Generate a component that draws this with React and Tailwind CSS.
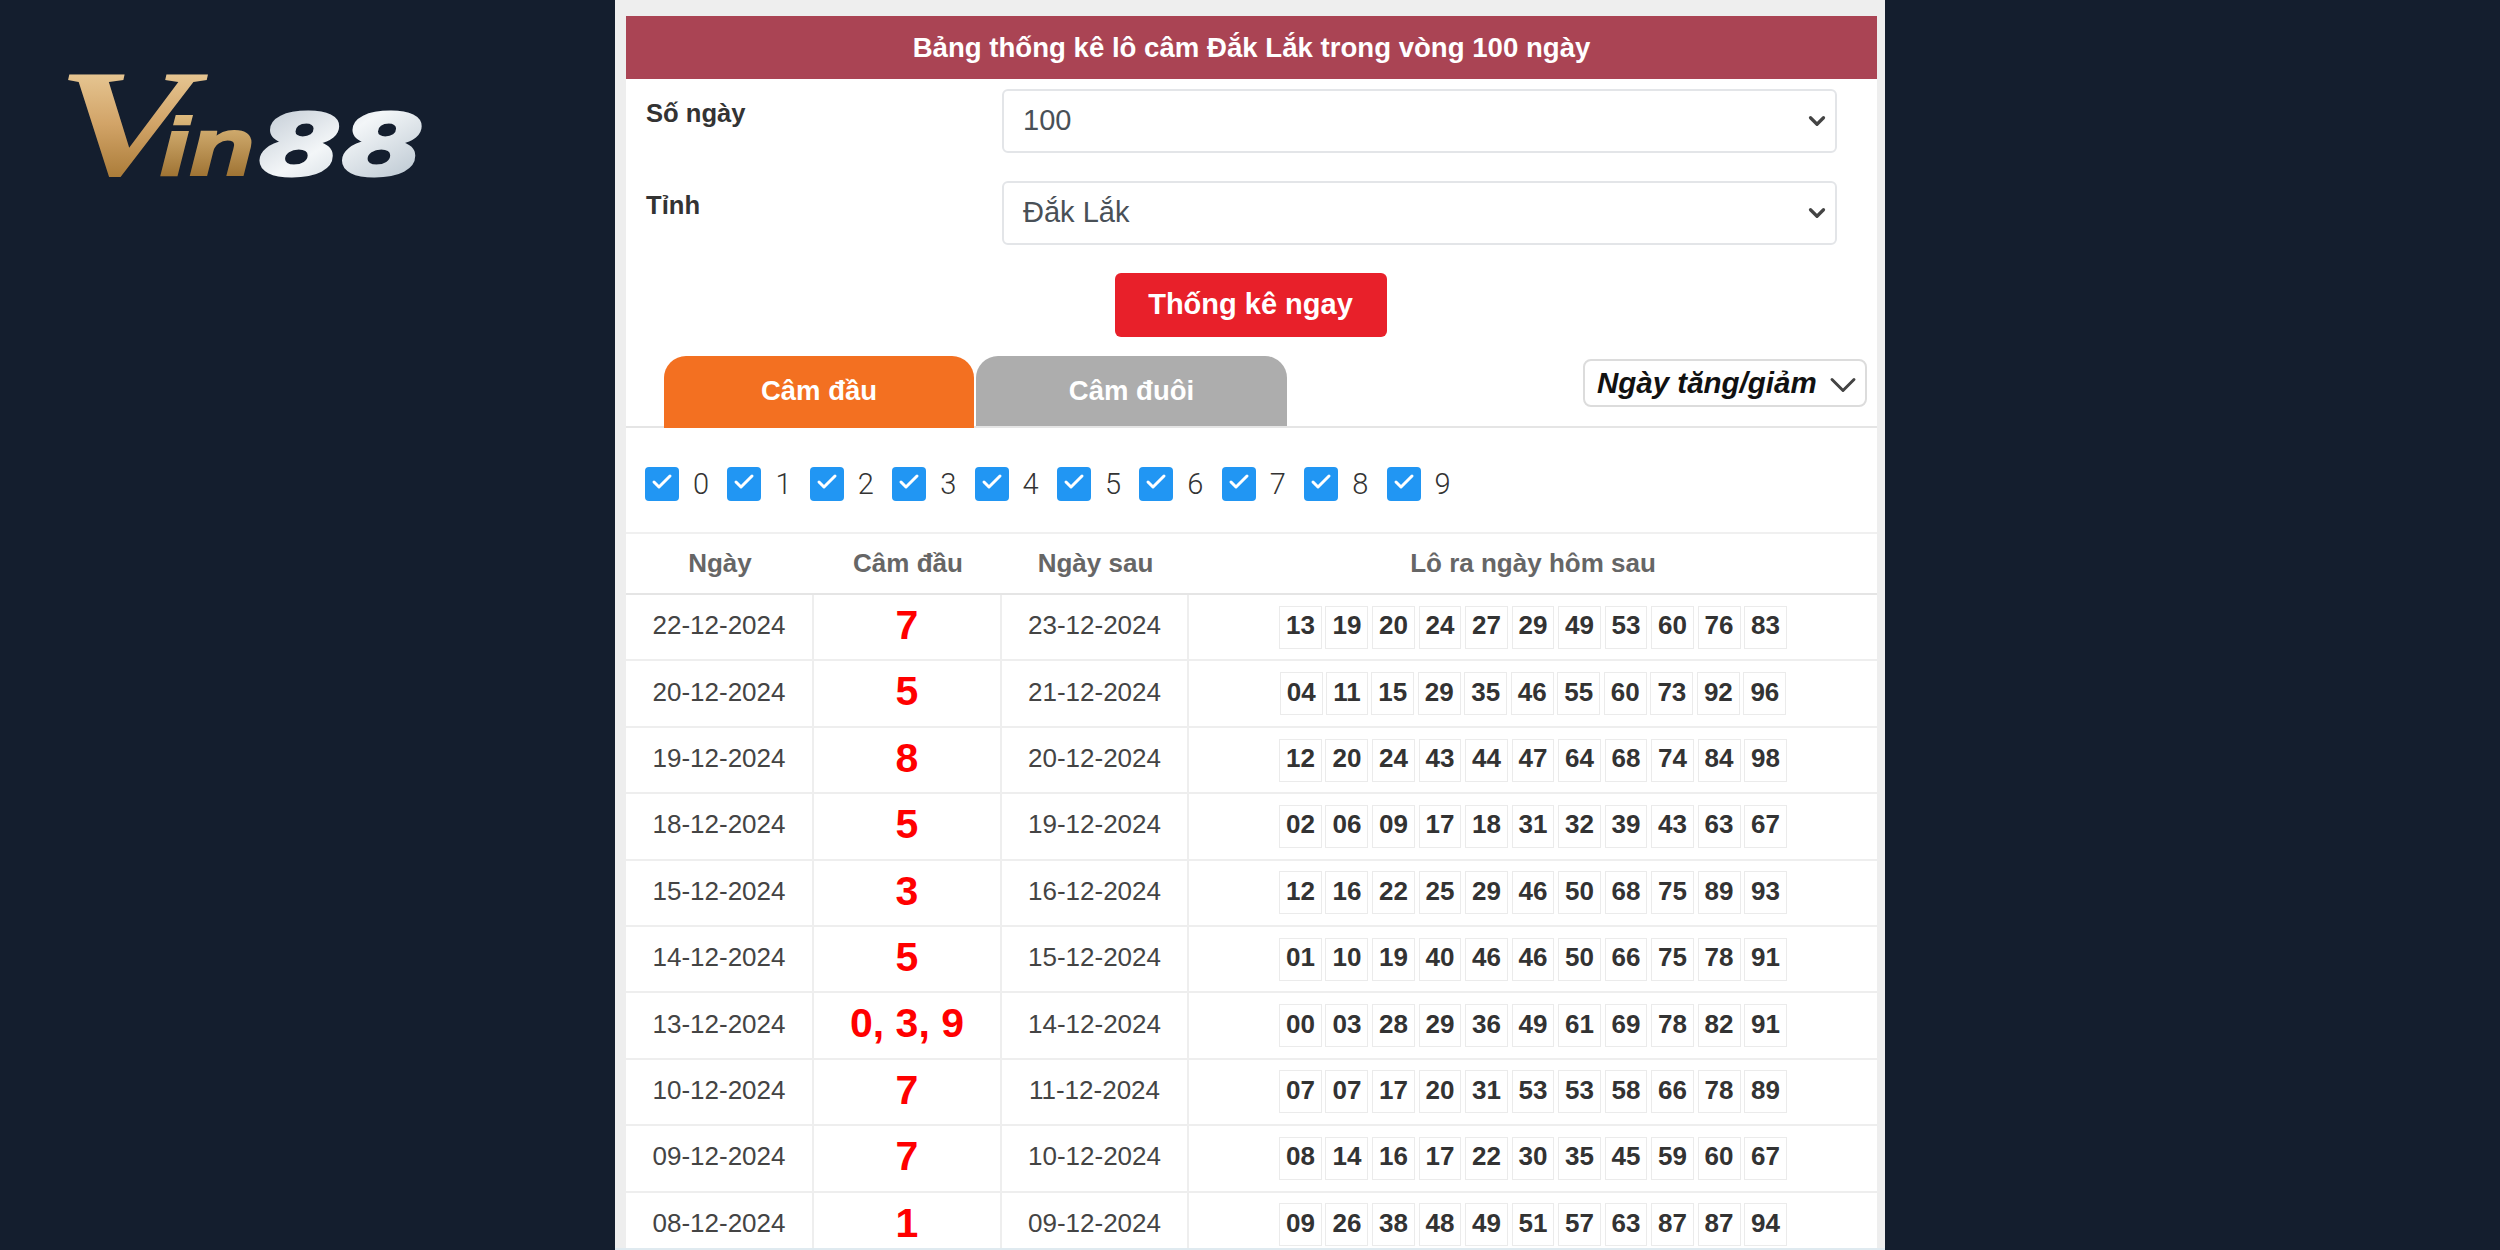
import { ChevronDown, Check } from 'lucide-react';

const rows = [
  ['22-12-2024', '7', '23-12-2024', '13 19 20 24 27 29 49 53 60 76 83'],
  ['20-12-2024', '5', '21-12-2024', '04 11 15 29 35 46 55 60 73 92 96'],
  ['19-12-2024', '8', '20-12-2024', '12 20 24 43 44 47 64 68 74 84 98'],
  ['18-12-2024', '5', '19-12-2024', '02 06 09 17 18 31 32 39 43 63 67'],
  ['15-12-2024', '3', '16-12-2024', '12 16 22 25 29 46 50 68 75 89 93'],
  ['14-12-2024', '5', '15-12-2024', '01 10 19 40 46 46 50 66 75 78 91'],
  ['13-12-2024', '0, 3, 9', '14-12-2024', '00 03 28 29 36 49 61 69 78 82 91'],
  ['10-12-2024', '7', '11-12-2024', '07 07 17 20 31 53 53 58 66 78 89'],
  ['09-12-2024', '7', '10-12-2024', '08 14 16 17 22 30 35 45 59 60 67'],
  ['08-12-2024', '1', '09-12-2024', '09 26 38 48 49 51 57 63 87 87 94'],
];

const digits = ['0', '1', '2', '3', '4', '5', '6', '7', '8', '9'];

const Logo = () => (
  <svg width="380" height="130" viewBox="0 0 380 130" className="block">
    <defs>
      <linearGradient id="gold" x1="0" y1="0" x2="0" y2="1">
        <stop offset="0" stopColor="#f3dcae" />
        <stop offset="0.5" stopColor="#d2a468" />
        <stop offset="1" stopColor="#95661f" />
      </linearGradient>
      <linearGradient id="goldIn" x1="0" y1="0" x2="0" y2="1">
        <stop offset="0" stopColor="#eccb90" />
        <stop offset="1" stopColor="#8f6120" />
      </linearGradient>
      <linearGradient id="silver" x1="0" y1="0" x2="1" y2="1">
        <stop offset="0" stopColor="#b9c3ce" />
        <stop offset="0.45" stopColor="#f3f6f8" />
        <stop offset="1" stopColor="#aebcc8" />
      </linearGradient>
    </defs>
    <text transform="translate(2 116) scale(1.36 1)" fontFamily="'Liberation Serif', serif" fontWeight="700" fontStyle="italic" fontSize="152" fill="url(#gold)">V</text>
    <text transform="translate(106 116) scale(1.3 1)" fontFamily="'Liberation Sans', sans-serif" fontWeight="700" fontStyle="italic" fontSize="82" fill="url(#goldIn)" stroke="url(#goldIn)" strokeWidth="2">in</text>
    <text transform="translate(205 116) scale(1.41 1)" fontFamily="'DejaVu Sans', sans-serif" fontWeight="700" fontStyle="italic" fontSize="84" fill="url(#silver)" stroke="url(#silver)" strokeWidth="3">88</text>
  </svg>
);

const FakeSelect = ({ value }) => (
  <div className="w-[835px] h-[64px] border-2 border-[#e3e5e8] rounded-[6px] bg-white flex items-center justify-between pl-[19px] pr-[5px] text-[29px] text-[#495057]">
    <span>{value}</span>
    <ChevronDown className="w-[26px] h-[26px] text-[#444]" strokeWidth={3} />
  </div>
);

const App = () => {
  return (
    <div className="w-full h-[1250px] overflow-hidden bg-[#141e2e] grid grid-cols-[615px_1270px_615px] font-['Liberation_Sans',sans-serif]">
      <div className="pt-[59px] pl-[54px]">
        <Logo />
      </div>

      <div className="bg-[#eeeeee] h-[1250px] flex flex-col">
        <div className="flex-1 min-h-0 overflow-hidden pt-[16px] pl-[11px] pr-[8px]">
          <div className="bg-white h-full">
            <div className="h-[63px] bg-[#aa4454] text-white font-bold text-[27.6px] flex items-center justify-center">
              Bảng thống kê lô câm Đắk Lắk trong vòng 100 ngày
            </div>

            <div className="mt-[10px] pl-[20px] pr-[40px] flex justify-between">
              <label className="font-bold text-[25.6px] text-[#333] leading-[48px]">Số ngày</label>
              <FakeSelect value="100" />
            </div>
            <div className="mt-[28px] pl-[20px] pr-[40px] flex justify-between">
              <label className="font-bold text-[25.6px] text-[#333] leading-[48px]">Tỉnh</label>
              <FakeSelect value="Đắk Lắk" />
            </div>

            <div className="mt-[28px] flex justify-center pr-[2px]">
              <button className="w-[272px] h-[64px] rounded-[6px] bg-[#e8202a] text-white font-bold text-[29px]">
                Thống kê ngay
              </button>
            </div>

            <div className="mt-[19px] h-[72px] pl-[38px] pr-[10px] border-b-2 border-[#e5e5e5] flex justify-between items-start">
              <div className="flex gap-[2px]">
                <div className="w-[310px] h-[72px] pb-[3px] rounded-t-[22px] bg-[#f37021] text-white font-bold text-[27.5px] flex items-center justify-center">
                  Câm đầu
                </div>
                <div className="w-[311px] h-[70px] pb-[1px] rounded-t-[22px] bg-[#adadad] text-white font-bold text-[27.5px] flex items-center justify-center">
                  Câm đuôi
                </div>
              </div>
              <div className="mt-[3px] w-[284px] h-[48px] border-2 border-[#dcdcdc] rounded-[8px] flex items-center justify-between pl-[12px] text-[29.5px] font-bold italic text-[#111]">
                <span>Ngày tăng/giảm</span>
                <ChevronDown className="w-[44px] h-[44px] mt-[4px] text-[#444]" strokeWidth={1.6} />
              </div>
            </div>

            <div className="h-[106px] pt-[39px] pl-[19px] border-b-2 border-[#f0f0f0] flex items-start">
              {digits.map(d => (
                <div key={d} className="w-[82.4px] flex items-center">
                  <span className="w-[34px] h-[34px] rounded-[4px] bg-[#2196f3] text-white flex items-center justify-center">
                    <Check className="w-[24px] h-[24px] -translate-y-[2px]" strokeWidth={3} />
                  </span>
                  <span className="ml-[14px] text-[29px] text-[#333] font-['Roboto',sans-serif] font-light leading-[34px]">{d}</span>
                </div>
              ))}
            </div>

            <div className="h-[61px] border-b-2 border-[#e5e5e5] grid grid-cols-[188px_188px_187px_1fr] items-center text-center font-bold text-[26px] text-[#666]">
              <div>Ngày</div>
              <div>Câm đầu</div>
              <div>Ngày sau</div>
              <div>Lô ra ngày hôm sau</div>
            </div>

            {rows.map(r => (
              <div key={r[0]} className="h-[66.4px] border-b-2 border-[#eeeeee] grid grid-cols-[188px_188px_187px_1fr] items-stretch text-center text-[26px] text-[#444]">
                <div className="flex items-center justify-center pb-[3px] border-r-2 border-[#eeeeee]">{r[0]}</div>
                <div className="flex items-center justify-center pb-[3px] border-r-2 border-[#eeeeee] font-bold text-[41px] text-[#ff0000]">{r[1]}</div>
                <div className="flex items-center justify-center pb-[3px] border-r-2 border-[#eeeeee]">{r[2]}</div>
                <div className="flex items-center justify-center gap-[3.6px]">
                  {r[3].split(' ').map((n, i) => (
                    <span key={i} className="h-[43px] px-[6px] pb-[3px] border border-[#ebebeb] flex items-center font-bold text-[#333]">{n}</span>
                  ))}
                </div>
              </div>
            ))}
          </div>
        </div>
        <div className="h-[2px] bg-[#dfeaf0]"></div>
      </div>

      <div></div>
    </div>
  );
};

export default App;
